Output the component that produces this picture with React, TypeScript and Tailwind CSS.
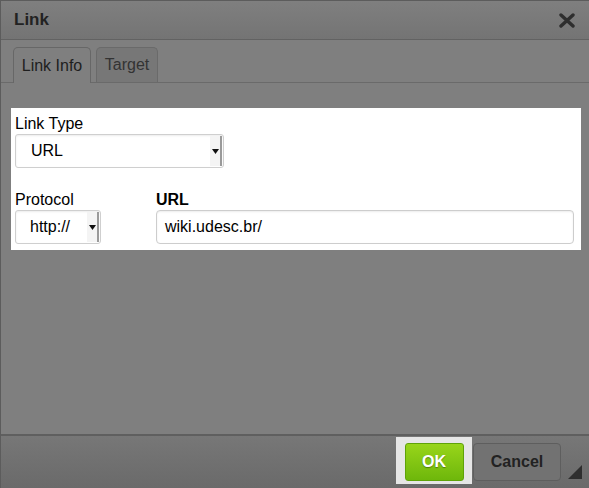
import React from "react";

function Arrow() {
  return (
    <div className="flex h-full w-[12px] items-center justify-center border-r-2 border-[#9a9a9a] bg-[#f4f4f4]">
      <svg width="7" height="5" viewBox="0 0 7 5">
        <path d="M0 0H7L3.5 5Z" fill="#111" />
      </svg>
    </div>
  );
}

export default function App() {
  return (
    <div
      className="flex h-[488px] w-[589px] flex-col border-l border-t border-[#5c5c5c] bg-[#7f7f7f]"
      style={{ fontFamily: '"Liberation Sans", Arial, sans-serif' }}
    >
      {/* title */}
      <div className="flex h-[39px] items-center justify-between border-b border-[#626262] bg-gradient-to-b from-[#7f7f7f] to-[#747474] pl-[13px] pr-[13px]">
        <span className="text-[17px] font-bold text-[#222]">Link</span>
        <svg width="16" height="15" viewBox="0 0 16 15" className="mr-[1px]">
          <path d="M2 2L14 13M14 2L2 13" stroke="#2e2e2e" strokeWidth="3.4" strokeLinecap="round" />
        </svg>
      </div>

      {/* tabs */}
      <div className="flex gap-[5px] border-b border-[#6a6a6a] px-[12px] pt-[7px]">
        <div className="-mb-px flex h-[36px] w-[78px] items-center justify-center rounded-t-[5px] border border-b-0 border-[#676767] bg-[#7f7f7f] text-[16px] text-[#1e1e1e]">
          Link Info
        </div>
        <div className="flex h-[35px] w-[62px] items-center justify-center rounded-t-[5px] border border-b-0 border-[#6a6a6a] bg-[#777] text-[16px] text-[#333]">
          Target
        </div>
      </div>

      {/* body */}
      <div className="flex-1 px-[10px] pt-[25px]">
        <div className="flex h-[142px] w-[570px] flex-col bg-white pl-[4px] pr-[7px] pt-[6px] text-black">
          <div className="text-[16px] leading-[20px]">Link Type</div>
          <div className="flex h-[34px] w-[209px] items-center justify-between rounded-[3px] border border-[#cfcfcf] bg-white pl-[15px] pr-[1px] text-[16px] shadow-[inset_0_1px_2px_rgba(0,0,0,0.08)]">
            <span>URL</span>
            <div className="h-[30px]">
              <Arrow />
            </div>
          </div>

          <div className="mt-[22px] flex gap-[55px]">
            <div className="flex flex-col">
              <div className="text-[16px] leading-[20px]">Protocol</div>
              <div className="flex h-[34px] w-[86px] items-center justify-between rounded-[3px] border border-[#cfcfcf] bg-white pl-[14px] pr-[1px] text-[16px] shadow-[inset_0_1px_2px_rgba(0,0,0,0.08)]">
                <span>http://</span>
                <div className="h-[30px]">
                  <Arrow />
                </div>
              </div>
            </div>
            <div className="flex flex-1 flex-col">
              <div className="text-[16px] font-bold leading-[20px]">URL</div>
              <div className="flex h-[34px] items-center rounded-[4px] border border-[#cdcdcd] bg-white pl-[8px] text-[16px] shadow-[inset_0_1px_2px_rgba(0,0,0,0.08)]">
                wiki.udesc.br/
              </div>
            </div>
          </div>
        </div>
      </div>

      {/* footer */}
      <div className="relative flex h-[54px] items-start justify-end border-t-2 border-[#5f5f5f] bg-gradient-to-b from-[#777] to-[#6a6a6a] pr-[28px] pt-[1px]">
        <div className="flex h-[47px] w-[76px] items-start justify-center bg-[#e6e6e6] pt-[6px]">
          <div className="flex h-[38px] w-[59px] items-center justify-center rounded-[3px] border border-[#5fa308] bg-gradient-to-b from-[#98d51a] to-[#6eb70b] text-[16px] font-bold text-white [text-shadow:0_1px_1px_rgba(0,0,0,0.35)]">
            OK
          </div>
        </div>
        <div className="ml-[1px] mt-[6px] flex h-[38px] w-[88px] items-center justify-center rounded-[4px] border border-[#5e5e5e] bg-[#727272] text-[16px] font-bold text-[#222]">
          Cancel
        </div>
        <svg width="14" height="14" viewBox="0 0 14 14" className="absolute bottom-[9px] right-[7px]">
          <path d="M14 0V14H0Z" fill="#2f2f2f" />
        </svg>
      </div>
    </div>
  );
}
